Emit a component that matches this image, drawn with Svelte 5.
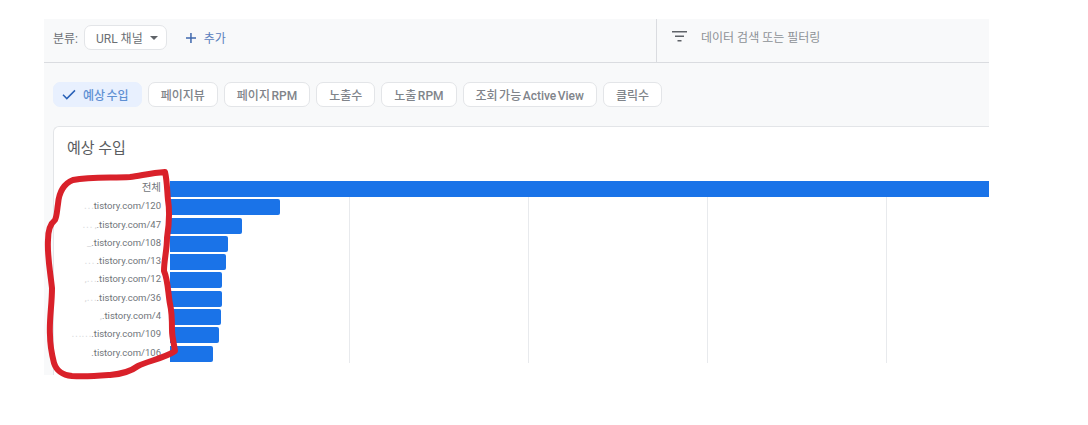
<script>
	const chips = [
		{ label: '예상 수입', active: true },
		{ label: '페이지뷰' },
		{ label: '페이지 RPM' },
		{ label: '노출수' },
		{ label: '노출 RPM' },
		{ label: '조회 가능 Active View' },
		{ label: '클릭수' }
	];

	// hidden is the part of the address that was rubbed out in the screenshot
	const rows = [
		{ hidden: '', label: '전체', end: 830 },
		{ hidden: '⋯', label: 'tistory.com/120', end: 110 },
		{ hidden: '⋯ ,', label: '.tistory.com/47', end: 72 },
		{ hidden: '_', label: '.tistory.com/108', end: 58 },
		{ hidden: '⋯ ', label: '.tistory.com/13', end: 56 },
		{ hidden: ',⋯', label: '.tistory.com/12', end: 52 },
		{ hidden: ',⋯', label: '.tistory.com/36', end: 52 },
		{ hidden: ',', label: '.tistory.com/4', end: 51 },
		{ hidden: '⋯⋯', label: '.tistory.com/109', end: 49 },
		{ hidden: '', label: '.tistory.com/106', end: 43 }
	];
</script>

<main>
	<section class="panel">
		<header class="toolbar">
			<div class="group">
				<span class="group-label">분류:</span>
				<button class="select">
					URL 채널
					<svg width="8" height="4" viewBox="0 0 8 4"><path d="M0 0h8L4 4z" fill="#5f6368" /></svg>
				</button>
				<button class="add">
					<svg width="12" height="12" viewBox="0 0 12 12"><path d="M5.2 1h1.5v4.2H11v1.5H6.7V11H5.2V6.7H1V5.2h4.2z" fill="#3f68ad" /></svg>
					추가
				</button>
			</div>
			<div class="filter">
				<svg width="16" height="12" viewBox="0 0 16 12"><path d="M0 1h15v1.5H0zM3 5.5h9V7H3zM5.5 10h4v1.5h-4z" fill="#5f6368" /></svg>
				<span>데이터 검색 또는 필터링</span>
			</div>
		</header>

		<div class="chips">
			{#each chips as chip}
				<button class="chip" class:active={chip.active}>
					{#if chip.active}
						<svg width="14" height="11" viewBox="0 0 14 11"><path d="M1 5.8l3.8 3.8L13 1.4" fill="none" stroke="#2a62b8" stroke-width="1.5" /></svg>
					{/if}
					{chip.label}
				</button>
			{/each}
		</div>

		<article class="card">
			<h2>예상 수입</h2>
			<div class="chart">
				<div class="labels">
					{#each rows as row}
						<div class="label"><span class="hidden">{row.hidden}</span>{row.label}</div>
					{/each}
				</div>
				<div class="plot">
					<div class="gridlines">
						<i></i><i></i><i></i><i></i>
					</div>
					{#each rows as row}
						<div class="track">
							<div class="bar" style="width: {row.end}px"></div>
						</div>
					{/each}
				</div>
			</div>
		</article>
	</section>

	<svg class="scribble" width="1088" height="425" viewBox="0 0 1088 425">
		<path
			d="M165 172 C150 173 140 176 130 177 C110 178 90 177 73 180 C63 184 59 192 58 204 C57 210 57 216 55 220 C50 224 48 230 48 240 C47 255 50 270 52 288 C52 305 49 320 50 335 C50 345 52 355 54 363 C57 372 63 375 72 376 C85 377 97 376 110 375 C122 374 130 372 138 366 C148 361 165 358 175 351 C174 343 172 338 172 330 C172 320 172 312 170 304 C168 293 168 280 164 271 C164 260 167 250 167 238 C169 225 170 212 168 200 C167 190 167 180 165 172 Z"
			fill="none"
			stroke="#d9212a"
			stroke-width="6"
			stroke-linejoin="round"
		/>
	</svg>
</main>

<style>
	:global(body) {
		margin: 0;
		background: #fff;
	}

	main {
		position: relative;
		width: 1088px;
		height: 425px;
		padding: 19px 0 0 44px;
		box-sizing: border-box;
		overflow: hidden;
		font-family: 'Roboto', 'Noto Sans CJK KR', sans-serif;
		color: #6b6f74;
	}

	.panel {
		width: 945px;
		height: 356px;
		background: #f8f9fa;
		overflow: hidden;
	}

	button {
		font: inherit;
		color: inherit;
		cursor: pointer;
	}

	.toolbar {
		display: flex;
		height: 43px;
		border-bottom: 1px solid #dadce0;
		box-sizing: content-box;
	}

	.group {
		display: flex;
		align-items: center;
		width: 612px;
		padding-left: 9px;
		padding-bottom: 6px;
		box-sizing: border-box;
		font-size: 12px;
	}

	.group-label {
		margin-right: 6px;
	}

	.select {
		display: flex;
		align-items: center;
		gap: 7px;
		height: 25px;
		padding: 0 8px 0 11px;
		background: #fff;
		border: 1px solid #e3e5e8;
		border-radius: 7px;
		font-size: 12px;
		white-space: nowrap;
	}

	.add {
		display: flex;
		align-items: center;
		gap: 7px;
		margin-left: 18px;
		padding: 0;
		background: none;
		border: 0;
		color: #5a80bd;
		font-size: 12px;
	}

	.filter {
		display: flex;
		align-items: center;
		gap: 13px;
		flex: 1;
		padding-left: 15px;
		padding-bottom: 9px;
		border-left: 1px solid #dadce0;
		font-size: 12px;
		color: #8d9196;
	}

	.chips {
		display: flex;
		gap: 6px;
		height: 63px;
		padding: 19px 0 0 9px;
		box-sizing: border-box;
	}

	.chip {
		display: flex;
		align-items: center;
		gap: 7px;
		height: 25px;
		padding: 0 12px;
		background: #fff;
		border: 1px solid #e3e5e8;
		border-radius: 7px;
		font-size: 12px;
		font-weight: 500;
		word-spacing: -1.5px;
		color: #80848a;
		white-space: nowrap;
	}

	.chip.active {
		padding: 0 12px 0 8px;
		background: #e8f0fe;
		border-color: #e8f0fe;
		color: #5f90d3;
	}

	.card {
		height: 249px;
		margin-left: 9px;
		background: #fff;
		border: 1px solid #e3e5e8;
		border-right: 0;
		border-bottom: 0;
		border-radius: 6px 0 0 0;
	}

	h2 {
		height: 54px;
		margin: 0;
		padding: 10px 0 0 13px;
		box-sizing: border-box;
		font-size: 15px;
		font-weight: 400;
		line-height: 22px;
		color: #5a5d61;
	}

	.chart {
		display: flex;
	}

	.labels {
		width: 107px;
		flex: none;
	}

	.label {
		height: 18.3px;
		line-height: 13px;
		text-align: right;
		font-size: 9.5px;
		color: #70757a;
		white-space: nowrap;
	}

	.label:first-child {
		font-size: 10.5px;
	}

	.hidden {
		color: #d5d7da;
	}

	.plot {
		position: relative;
		flex: 1;
		margin-left: 9px;
	}

	.gridlines {
		position: absolute;
		top: 16px;
		bottom: 0;
		left: 179px;
		display: flex;
	}

	.gridlines i {
		width: 179px;
		height: 166px;
		box-sizing: border-box;
		border-left: 1px solid #e8eaed;
	}

	.track {
		position: relative;
		height: 18.3px;
	}

	.bar {
		height: 16px;
		background: #1a73e8;
		border-radius: 0 2px 2px 0;
	}

	.scribble {
		position: absolute;
		top: 0;
		left: 0;
		pointer-events: none;
	}
</style>
